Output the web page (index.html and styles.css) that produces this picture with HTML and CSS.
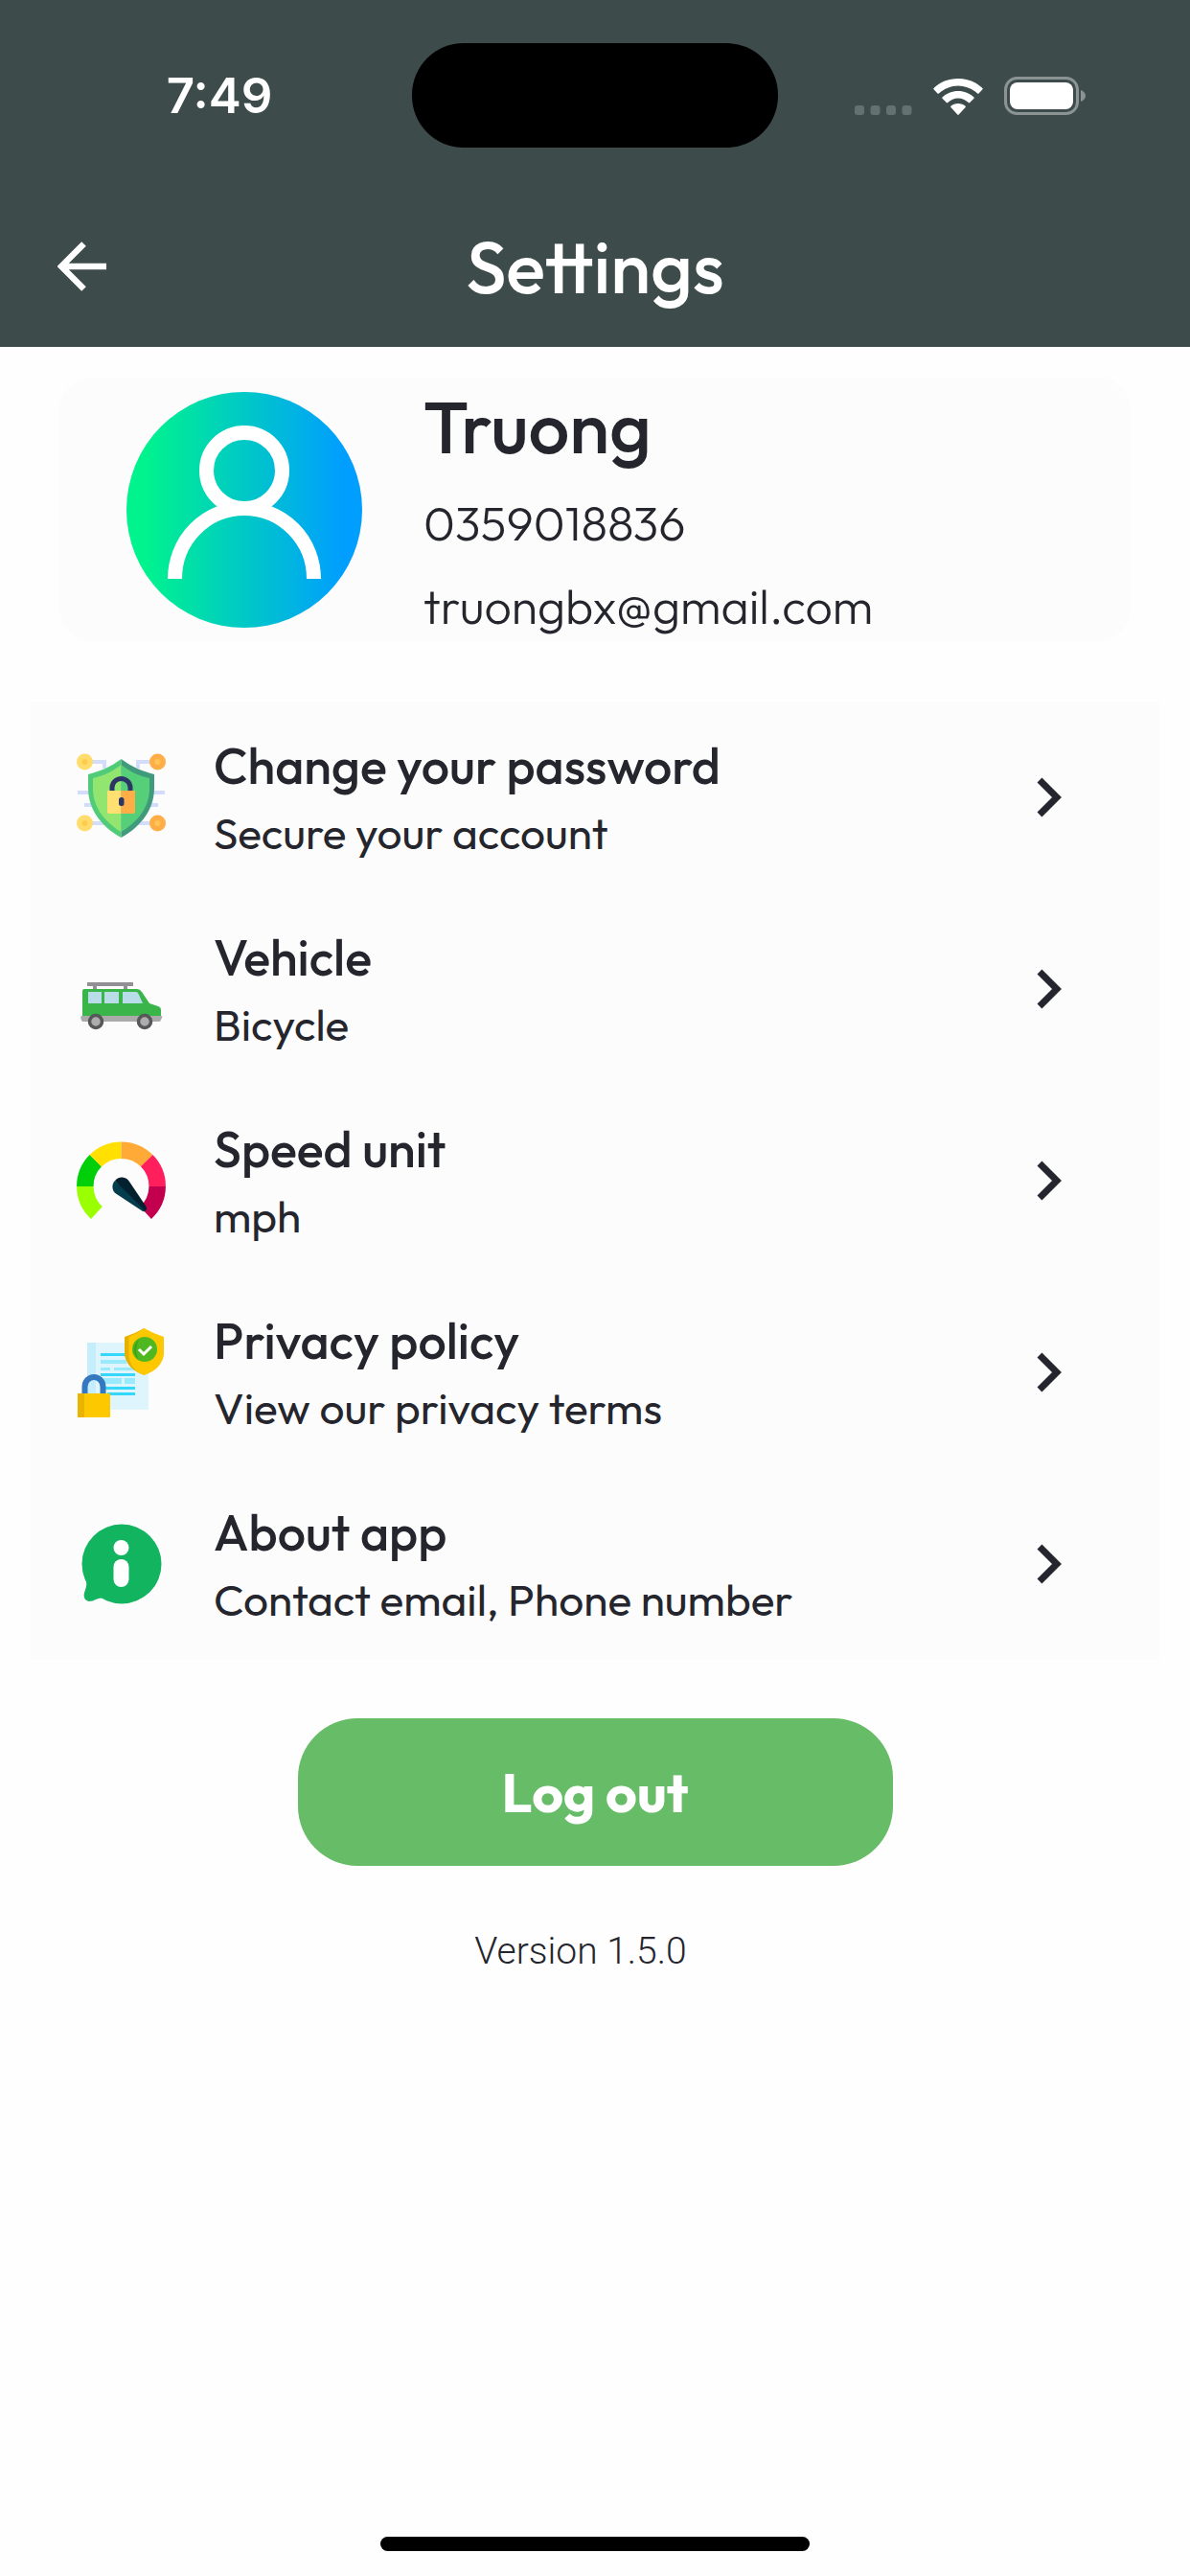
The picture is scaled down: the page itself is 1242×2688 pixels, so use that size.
FILE: index.html
```html
<!DOCTYPE html>
<html lang="en">
<head>
  <meta charset="utf-8">
  <meta name="viewport" content="width=device-width, initial-scale=1">
  <title>Settings</title>
  <link rel="stylesheet" href="styles.css">
</head>
<body>
  <div class="screen">
    <header class="top">
      <div class="status">
        <span class="time">7:49</span>
        <span class="island"></span>
        <div class="indicators">
          <svg class="dots" viewBox="0 0 60 10" aria-hidden="true">
            <g fill="#647171"><rect width="10" height="10" rx="3"/><rect x="16.500" width="10" height="10" rx="3"/><rect x="33" width="10" height="10" rx="3"/><rect x="49.500" width="10" height="10" rx="3"/></g>
          </svg>
          <svg class="wifi" viewBox="0 0 52 38" aria-hidden="true">
            <g fill="#fff">
              <path d="M0.500 11.200a1 1 0 0 1 0-1.200C7 3.600 16 0 26 0s19 3.600 25.500 10a1 1 0 0 1 0 1.200l-4 4.300a1 1 0 0 1-1.400 0C40.500 10.500 33.500 7.500 26 7.500S11.500 10.500 5.900 15.500a1 1 0 0 1-1.400 0z"/>
              <path d="M9.500 20.800a1 1 0 0 1 0-1.300C13.800 15.400 19.600 13 26 13s12.200 2.400 16.500 6.500a1 1 0 0 1 0 1.300l-4.300 4.300a1 1 0 0 1-1.400 0C33.800 22.200 30.100 20.500 26 20.500s-7.800 1.700-10.800 4.600a1 1 0 0 1-1.400 0z"/>
              <path d="M18.400 30a1 1 0 0 1 0-1.300C20.400 26.800 23 26 26 26s5.600.8 7.600 2.700a1 1 0 0 1 0 1.300l-6.900 7.600a1 1 0 0 1-1.400 0z"/>
            </g>
          </svg>
          <svg class="battery" viewBox="0 0 86 40" aria-hidden="true">
            <rect x="1.500" y="1.500" width="75" height="37" rx="12" fill="none" stroke="#8b9393" stroke-width="3"/>
            <rect x="6" y="6" width="66" height="28" rx="8" fill="#fff"/>
            <path d="M80 14c3 1 5 3.500 5 6s-2 5-5 6z" fill="#8b9393"/>
          </svg>
        </div>
      </div>
      <div class="bar">
        <button class="back" type="button" aria-label="Back">
          <svg viewBox="0 0 52 52" aria-hidden="true"><path d="M51 26H5M27.500 2.500L4 26l23.500 23.500" fill="none" stroke="#fff" stroke-width="6.500"/></svg>
        </button>
        <h1 class="heading">Settings</h1>
      </div>
    </header>

    <main class="content">
      <section class="profile">
        <svg class="avatar" viewBox="0 0 246 246" aria-hidden="true">
          <defs><linearGradient id="av" x1="0" x2="1" y1="0" y2="0"><stop offset="0.080" stop-color="#00f38d"/><stop offset="0.920" stop-color="#009eff"/></linearGradient></defs>
          <circle cx="123" cy="123" r="123" fill="url(#av)"/>
          <g fill="none" stroke="#fff" stroke-width="15">
            <circle cx="123" cy="82" r="39.500"/>
            <path d="M50.500 195a72.500 73.500 0 0 1 145 0"/>
          </g>
        </svg>
        <div class="person">
          <h2 class="name">Truong</h2>
          <p class="contact">0359018836</p>
          <p class="contact">truongbx@gmail.com</p>
        </div>
      </section>

      <nav class="list" aria-label="Settings">
        <a class="row" href="#password">
          <svg class="icon" viewBox="0 0 93 93" aria-hidden="true">
            <g fill="none" stroke="#d3dcfb" stroke-width="4">
              <path d="M13 9H29v7M80 9H64v7M1 41H20M92 41H76M8 54H20M85 54H72M13 73H32M80 73H62"/>
            </g>
            <circle cx="8.500" cy="9" r="8.500" fill="#ffdc6b"/><circle cx="8.500" cy="73" r="8.500" fill="#ffdc6b"/>
            <circle cx="84.500" cy="9" r="8.500" fill="#ffad46"/><circle cx="84.500" cy="73" r="8.500" fill="#ffad46"/>
            <g fill="#ffcb4a"><circle cx="8.500" cy="9" r="3"/><circle cx="8.500" cy="73" r="3"/></g>
            <g fill="#ffc65a"><circle cx="84.500" cy="9" r="3"/><circle cx="84.500" cy="73" r="3"/></g>
            <path d="M46.500 6C36 14 24 19 12 22v14c0 22 13 40 34.500 52z" fill="#50cc79"/>
            <path d="M46.500 6C57 14 69 19 81 22v14c0 22-13 40-34.500 52z" fill="#3f9b7b"/>
            <path d="M46.500 12C38 19 27 24 17 26v11c0 18 11 34 29.500 45z" fill="#92e66f"/>
            <path d="M46.500 12C55 19 66 24 76 26v11c0 18-11 34-29.500 45z" fill="#55cf78"/>
            <path d="M37 41v-5a9.500 9.500 0 0 1 19 0v5" fill="none" stroke="#2d3567" stroke-width="5"/>
            <path d="M32 39h14.500v24H34a2 2 0 0 1-2-2z" fill="#ffe071"/>
            <path d="M46.500 39H61v22a2 2 0 0 1-2 2H46.500z" fill="#ffae47"/>
            <rect x="44" y="46" width="5.500" height="9" rx="2.500" fill="#2d3567"/>
          </svg>
          <span class="label"><span class="title">Change your password</span><span class="detail">Secure your account</span></span>
          <svg class="chevron" viewBox="0 0 26 42" aria-hidden="true"><path d="M3 3l18 18L3 39" fill="none" stroke="#25262d" stroke-width="7"/></svg>
        </a>
        <a class="row" href="#vehicle">
          <svg class="icon" viewBox="0 0 93 93" aria-hidden="true">
            <path d="M11 41h48M19 41v7M51 41v7" fill="none" stroke="#929094" stroke-width="4"/>
            <path d="M8 46h55q3 0 5 3l8 12 9 3q3 1 3 4v10H6V48q0-2 2-2z" fill="#39b54a"/>
            <path d="M5 74h83q2 0 1 2l-2 4H6q-3-4-1-6z" fill="#aaaaab"/>
            <g fill="#b9dce9"><rect x="12" y="49" width="14" height="12"/><rect x="29" y="49" width="15" height="12"/><path d="M48 49h14q2 0 3 3l4 9H48z"/></g>
            <g fill="#adadad" stroke="#57575a" stroke-width="3.500"><circle cx="20" cy="80" r="6.500"/><circle cx="71" cy="80" r="6.500"/></g>
          </svg>
          <span class="label"><span class="title">Vehicle</span><span class="detail">Bicycle</span></span>
          <svg class="chevron" viewBox="0 0 26 42" aria-hidden="true"><path d="M3 3l18 18L3 39" fill="none" stroke="#25262d" stroke-width="7"/></svg>
        </a>
        <a class="row" href="#speed">
          <svg class="icon" viewBox="0 0 93 93" aria-hidden="true">
            <g fill="none" stroke-width="17.500">
              <path d="M20.900 79.500A38 38 0 0 1 8.800 52" stroke="#9aff00"/>
              <path d="M8.800 52A38 38 0 0 1 19.800 25.200" stroke="#00cf09"/>
              <path d="M19.800 25.200A38 38 0 0 1 46.500 14.200" stroke="#ffe000"/>
              <path d="M46.500 14.200A38 38 0 0 1 73.200 25.200" stroke="#ffaa37"/>
              <path d="M73.200 25.200A38 38 0 0 1 84.200 52" stroke="#ff1f5d"/>
              <path d="M84.200 52A38 38 0 0 1 72 79.500" stroke="#c3004e"/>
            </g>
            <path d="M40 46a9 9 0 0 0 1 13.500L69 78q4 1 4-4z" fill="#023c4d"/>
            <path d="M40 46a9 9 0 0 1 15 1L72.500 73q1 3-1 4.500z" fill="#03202f"/>
          </svg>
          <span class="label"><span class="title">Speed unit</span><span class="detail">mph</span></span>
          <svg class="chevron" viewBox="0 0 26 42" aria-hidden="true"><path d="M3 3l18 18L3 39" fill="none" stroke="#25262d" stroke-width="7"/></svg>
        </a>
        <a class="row" href="#privacy">
          <svg class="icon" viewBox="0 0 93 93" aria-hidden="true">
            <rect x="11" y="15" width="64" height="70" fill="#def5fd"/>
            <rect x="11" y="15" width="9" height="70" fill="#c5edfc"/>
            <g fill="#99eafd"><path d="M25 33h27v4H25zM25 41h10v3H25zM39 41h22v3H39zM28 52h19v6H28zM50 52h11v6H50z"/></g>
            <g fill="#35d8fb"><path d="M25 26h28v3H25zM25 47h36v3H25zM28 61h33v3H28zM32 67h29v3H32z"/></g>
            <path d="M70.500 0Q60 6 50 9v19q3 15 20.500 21z" fill="#e4b100"/>
            <path d="M70.500 0Q81 6 91 9v19q-3 15-20.500 21-14-5-16-20V9q8-3 16-9z" fill="#fdc800"/>
            <circle cx="71" cy="22" r="13" fill="#4fb820"/><path d="M65 12a13 13 0 0 0-1 20q-4-10 1-20z" fill="#3fa315"/>
            <path d="M65 22l5 5 8-8" fill="none" stroke="#fff" stroke-width="3"/>
            <path d="M8.500 69V61a9.500 10 0 0 1 19 0v8" fill="none" stroke="#3478bf" stroke-width="6"/>
            <rect x="1" y="68" width="34" height="25" rx="1" fill="#fdc800"/><path d="M2 68h6v25H2q-1 0-1-1V69q0-1 1-1z" fill="#e9b300"/>
          </svg>
          <span class="label"><span class="title">Privacy policy</span><span class="detail">View our privacy terms</span></span>
          <svg class="chevron" viewBox="0 0 26 42" aria-hidden="true"><path d="M3 3l18 18L3 39" fill="none" stroke="#25262d" stroke-width="7"/></svg>
        </a>
        <a class="row" href="#about">
          <svg class="icon" viewBox="0 0 93 93" aria-hidden="true">
            <circle cx="47" cy="46" r="41.500" fill="#12b460"/>
            <path d="M8 58q4 8 1 15-4 10 4 12 4 0 7-2 6-3 12 0l8-20z" fill="#12b460"/>
            <circle cx="46.500" cy="29" r="8" fill="#fff"/><rect x="38.500" y="41" width="16" height="29" rx="8" fill="#fff"/>
          </svg>
          <span class="label"><span class="title">About app</span><span class="detail">Contact email, Phone number</span></span>
          <svg class="chevron" viewBox="0 0 26 42" aria-hidden="true"><path d="M3 3l18 18L3 39" fill="none" stroke="#25262d" stroke-width="7"/></svg>
        </a>
      </nav>

      <button class="logout" type="button">Log out</button>
      <p class="version">Version 1.5.0</p>
    </main>
    <div class="home"></div>
  </div>
</body>
</html>
```
FILE: styles.css
```css
* {
  box-sizing: border-box;
}

body {
  margin: 0;
  background: #fefefe;
  color: #25262d;
  font-family: Outfit, Inter, sans-serif;
}

h1,
h2,
p {
  margin: 0;
}

button {
  border: 0;
  font-family: inherit;
  cursor: pointer;
}

svg {
  display: block;
  flex: none;
}

.screen {
  display: flex;
  flex-direction: column;
  min-height: 100vh;
}

.top {
  background: #3d4b4b;
  color: #fff;
}

.status {
  display: grid;
  grid-template-columns: 1fr 382px 1fr;
  align-items: center;
  padding-top: 45px;
}

.time {
  padding-left: 28px;
  text-align: center;
  font-family: Inter, sans-serif;
  font-size: 51px;
  font-weight: 600;
  line-height: 60px;
}

.island {
  height: 109px;
  border-radius: 54px;
  background: #000;
}

.indicators {
  display: flex;
  justify-content: flex-end;
  align-items: flex-end;
  gap: 22px;
  padding-right: 108px;
}

.dots {
  width: 60px;
  height: 10px;
}

.wifi {
  width: 52px;
  height: 38px;
}

.battery {
  width: 86px;
  height: 40px;
}

.bar {
  display: grid;
  grid-template-columns: 1fr auto 1fr;
  align-items: center;
  padding: 74px 60px 34px;
}

.back {
  justify-self: start;
  padding: 0;
  background: none;
}

.back svg {
  width: 52px;
  height: 52px;
}

.heading {
  font-size: 76px;
  font-weight: 500;
  line-height: 100px;
}

.content {
  display: flex;
  flex-direction: column;
  align-items: center;
}

.profile {
  display: flex;
  align-items: center;
  align-self: stretch;
  gap: 64px;
  margin: 31px 62px 0;
  padding: 0 70px;
  border-radius: 36px;
  background: #fcfcfc;
}

.avatar {
  width: 246px;
  height: 246px;
}

.person {
  display: flex;
  flex-direction: column;
  gap: 27px;
  padding: 8px 0 7px;
}

.name {
  font-size: 76px;
  font-weight: 500;
  line-height: 88px;
}

.contact {
  font-size: 50px;
  font-weight: 300;
  line-height: 60px;
}

.list {
  align-self: stretch;
  margin: 62px 32px 0;
  background: #fcfcfc;
}

.row {
  display: flex;
  align-items: center;
  height: 200px;
  padding: 0 102px 0 48px;
  color: inherit;
  text-decoration: none;
}

.icon {
  width: 93px;
  height: 93px;
}

.label {
  display: flex;
  flex: 1;
  flex-direction: column;
  gap: 10px;
  padding: 4px 0 0 50px;
}

.title {
  font-size: 52px;
  font-weight: 500;
  line-height: 60px;
}

.detail {
  font-size: 46px;
  font-weight: 400;
  line-height: 60px;
}

.chevron {
  width: 26px;
  height: 42px;
}

.logout {
  width: 50%;
  height: 154px;
  margin-top: 61px;
  border-radius: 62px;
  background: #67bc67;
  color: #fff;
  font-size: 57px;
  font-weight: 700;
}

.version {
  margin-top: 66px;
  padding-right: 30px;
  font-family: Roboto, sans-serif;
  font-size: 39px;
  font-weight: 300;
  line-height: 46px;
}

.home {
  width: 36%;
  height: 15px;
  margin: auto auto 26px;
  border-radius: 8px;
  background: #000;
}
```
